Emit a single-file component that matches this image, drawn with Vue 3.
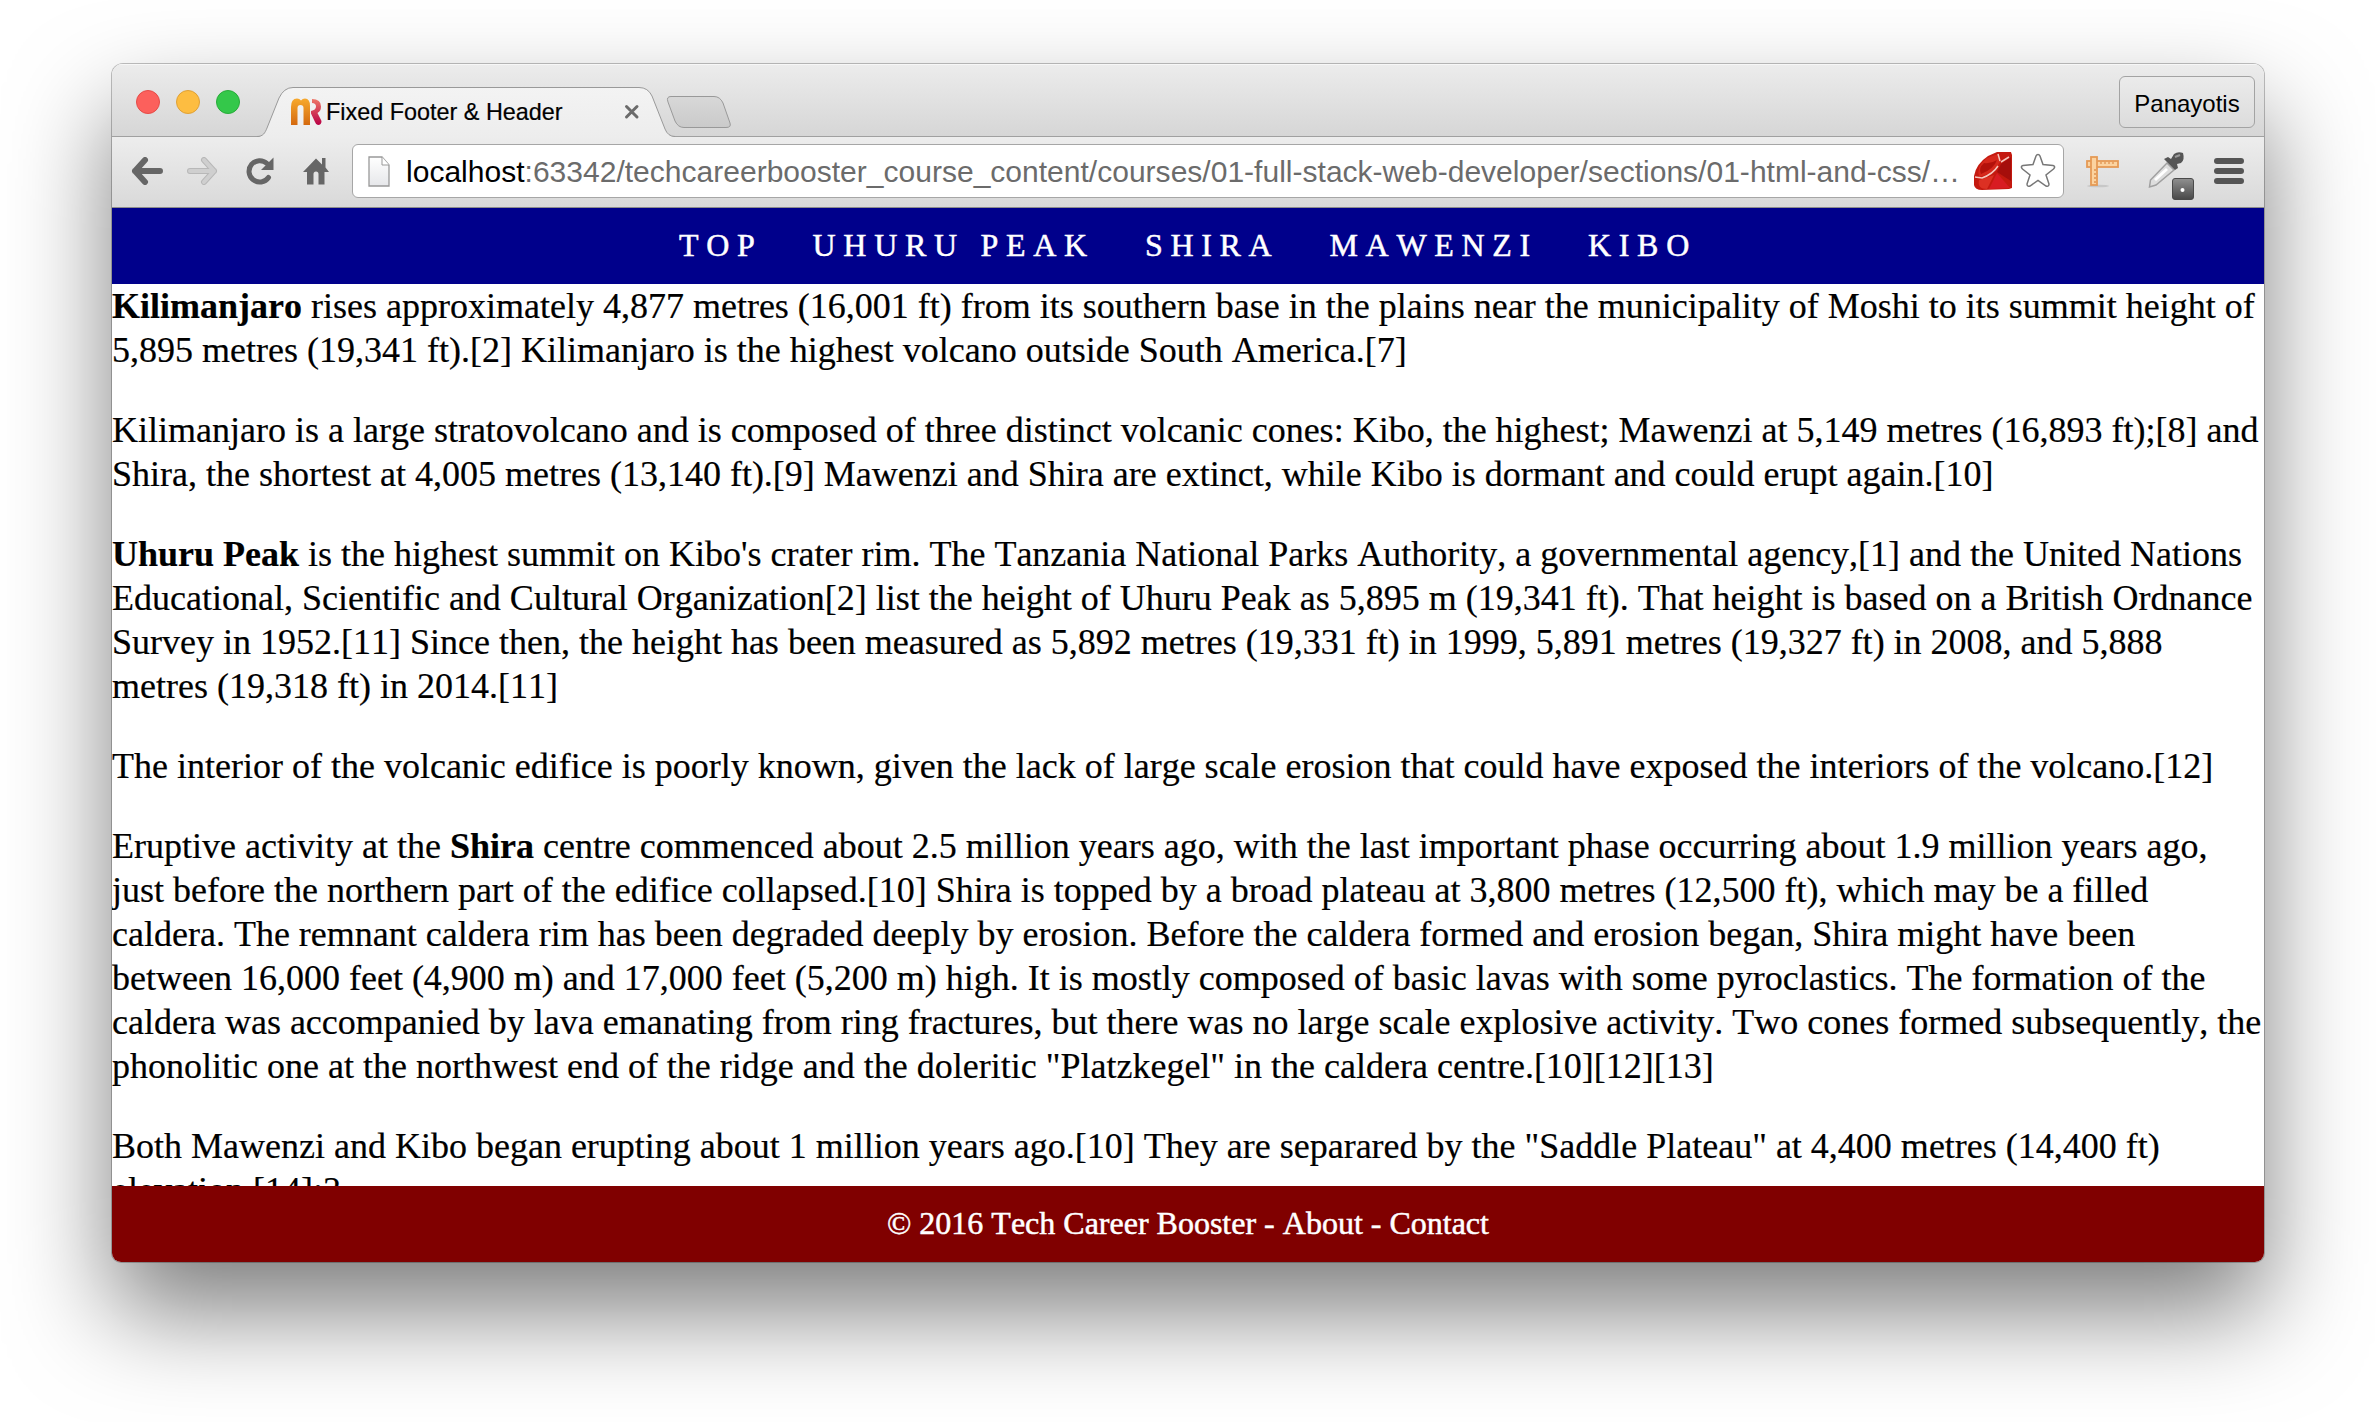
<script setup>
const nav = ['TOP', 'UHURU PEAK', 'SHIRA', 'MAWENZI', 'KIBO']
const paragraphs = [
  [
    ['Kilimanjaro', ' rises approximately 4,877 metres (16,001 ft) from its southern base in the plains near the municipality of Moshi to its summit height of'],
    ['', '5,895 metres (19,341 ft).[2] Kilimanjaro is the highest volcano outside South America.[7]'],
  ],
  [
    ['', 'Kilimanjaro is a large stratovolcano and is composed of three distinct volcanic cones: Kibo, the highest; Mawenzi at 5,149 metres (16,893 ft);[8] and'],
    ['', 'Shira, the shortest at 4,005 metres (13,140 ft).[9] Mawenzi and Shira are extinct, while Kibo is dormant and could erupt again.[10]'],
  ],
  [
    ['Uhuru Peak', " is the highest summit on Kibo's crater rim. The Tanzania National Parks Authority, a governmental agency,[1] and the United Nations"],
    ['', 'Educational, Scientific and Cultural Organization[2] list the height of Uhuru Peak as 5,895 m (19,341 ft). That height is based on a British Ordnance'],
    ['', 'Survey in 1952.[11] Since then, the height has been measured as 5,892 metres (19,331 ft) in 1999, 5,891 metres (19,327 ft) in 2008, and 5,888'],
    ['', 'metres (19,318 ft) in 2014.[11]'],
  ],
  [
    ['', 'The interior of the volcanic edifice is poorly known, given the lack of large scale erosion that could have exposed the interiors of the volcano.[12]'],
  ],
  [
    ['Shira', ' centre commenced about 2.5 million years ago, with the last important phase occurring about 1.9 million years ago,', 'Eruptive activity at the '],
    ['', 'just before the northern part of the edifice collapsed.[10] Shira is topped by a broad plateau at 3,800 metres (12,500 ft), which may be a filled'],
    ['', 'caldera. The remnant caldera rim has been degraded deeply by erosion. Before the caldera formed and erosion began, Shira might have been'],
    ['', 'between 16,000 feet (4,900 m) and 17,000 feet (5,200 m) high. It is mostly composed of basic lavas with some pyroclastics. The formation of the'],
    ['', 'caldera was accompanied by lava emanating from ring fractures, but there was no large scale explosive activity. Two cones formed subsequently, the'],
    ['', 'phonolitic one at the northwest end of the ridge and the doleritic "Platzkegel" in the caldera centre.[10][12][13]'],
  ],
  [
    ['', 'Both Mawenzi and Kibo began erupting about 1 million years ago.[10] They are separared by the "Saddle Plateau" at 4,400 metres (14,400 ft)'],
    ['', 'elevation.[14]:3'],
  ],
]
</script>

<template>
  <div class="desktop">
    <div class="window">
      <div class="tabbar">
        <div class="lights"><i class="red"></i><i class="amber"></i><i class="green"></i></div>
        <div class="tab">
          <svg class="tabshape" width="418" height="74" viewBox="0 0 418 74">
            <defs><linearGradient id="tabfill" x1="0" y1="0" x2="0" y2="1"><stop offset="0" stop-color="#f3f3f3" /><stop offset="1" stop-color="#ededed" /></linearGradient></defs>
            <path d="M0 74V73C6 72.500 8 69 10 64L22 34Q27 23.500 36 23.500H382Q391 23.500 395 32L408 65Q411 72.500 418 73V74Z" fill="url(#tabfill)" />
            <path d="M0 72.500C6 72.500 8 69 10 64L22 34Q27 23.500 36 23.500H382Q391 23.500 395 32L408 65Q411 72.500 418 72.500" fill="none" stroke="#999" />
          </svg>
          <div class="tabcontent">
            <svg width="31" height="28" viewBox="0 0 31 28">
              <defs>
                <linearGradient id="mo" x1="0" y1="0" x2="0" y2="1"><stop offset="0" stop-color="#f7a92d" /><stop offset="1" stop-color="#d4690f" /></linearGradient>
                <linearGradient id="rp" x1="0" y1="0" x2="0" y2="1"><stop offset="0" stop-color="#ee7768" /><stop offset="1" stop-color="#b90045" /></linearGradient>
              </defs>
              <path d="M0 27V9Q0 0.500 6 0.500Q8.500 0.500 10 2.500Q11.500 0.500 14 0.500Q19 0.500 19 8V27H12.500V10Q12.500 7 9.500 7Q6.500 7 6.500 10V27Z" fill="url(#mo)" />
              <path d="M21 1Q30 1 30 8.500Q30 13 26.500 15L30.500 23Q30.500 27 27 27Q25 27 24 24L20 15.500V13Q25 12 25 8.500Q25 5 21 5Z" fill="url(#rp)" />
            </svg>
            <span class="title">Fixed Footer &amp; Header</span>
            <svg class="close" width="16" height="16" viewBox="0 0 16 16"><path d="M2.500 2.500L13 13M13 2.500L2.500 13" stroke="#6b6b6b" stroke-width="3" stroke-linecap="round" /></svg>
          </div>
        </div>
        <svg class="newtab" width="66" height="34" viewBox="0 0 66 34">
          <defs><linearGradient id="nt" x1="0" y1="0" x2="0" y2="1"><stop offset="0" stop-color="#d8d8d8" /><stop offset="1" stop-color="#cacaca" /></linearGradient></defs>
          <path d="M5 0.500H48Q54 0.500 57 7L64 27Q65.500 31.500 60 31.500H18Q12 31.500 9 25L2 6Q0 0.500 5 0.500Z" fill="url(#nt)" stroke="#999" />
        </svg>
        <div class="profile">Panayotis</div>
      </div>

      <div class="toolbar">
        <svg class="back" width="32" height="28" viewBox="0 0 32 28"><path d="M14 3L4 14L14 25M4 14H29" fill="none" stroke="#666" stroke-width="6" stroke-linecap="round" stroke-linejoin="round" /></svg>
        <svg class="fwd" width="32" height="28" viewBox="0 0 32 28"><path d="M18 3L28 14L18 25M28 14H4" fill="none" stroke="#b8b8b8" stroke-width="6" stroke-linecap="round" stroke-linejoin="round" /><path d="M18 3L28 14L18 25M28 14H4" fill="none" stroke="#cfcfcf" stroke-width="4" stroke-linecap="round" stroke-linejoin="round" /></svg>
        <svg class="reload" width="28" height="28" viewBox="0 0 28 28"><path d="M22.500 20.500A10.700 10.700 0 1 1 21 6.500" fill="none" stroke="#666" stroke-width="5" stroke-linecap="round" /><path d="M27.500 0.500V13H15Z" fill="#666" /></svg>
        <svg class="home" width="26" height="28" viewBox="0 0 26 28"><path d="M13 1.500L19 7.500V1H22.500V10.500L26 15H21.500V27.500H15.500V17Q15.500 14.500 13 14.500Q10.500 14.500 10.500 17V27.500H4V15H0Z" fill="#666" /></svg>
        <div class="omnibox">
          <svg class="page" width="22" height="31" viewBox="0 0 22 31"><defs><linearGradient id="pg" x1="0" y1="0" x2="0" y2="1"><stop offset="0" stop-color="#fff" /><stop offset="1" stop-color="#e6e7ea" /></linearGradient></defs><path d="M1 1H14L21 9V30H1Z" fill="url(#pg)" stroke="#999" stroke-width="1.300" /><path d="M14 1V9H21" fill="#fff" stroke="#999" /></svg>
          <span class="url"><b>localhost</b>:63342/techcareerbooster_course_content/courses/01-full-stack-web-developer/sections/01-html-and-css/…</span>
          <svg class="ruby" width="38" height="38" viewBox="0 0 38 38">
            <path d="M14 4L23 0H37L38 3V36L35 37L8 38Q1 38 0 33V24Q2 12 14 4Z" fill="#c4190f" />
            <path d="M13 6L24 2L26 10Q20 22 5 25Q2 14 13 6Z" fill="#d6281c" />
            <path d="M10 11Q17 12 23 8Q20 17 7 22Q4 16 10 11Z" fill="#b3110b" />
            <path d="M27 12L37 5V29L23 20Z" fill="#a50e0b" />
            <path d="M5 28L20 23L13 37Q3 37 5 28Z" fill="#dc3023" />
            <path d="M23 21L36 36L15 37Z" fill="#d81c22" />
            <path d="M1 25L8 26Q19 22 24 14M26 9L24 2M27 10L35 5" fill="none" stroke="#f5c6bd" stroke-width="1.500" />
          </svg>
          <svg class="star" width="36" height="36" viewBox="0 0 36 36"><path d="M18 2.500Q19.300 2.500 20 4L23 12.500L33 13.500Q36 14.500 33.500 17L26 23L29 32Q29 35 26 34L18 28.500L10 34Q7 35 7 32L10 23L2.500 17Q0 14.500 3 13.500L13 12.500L16 4Q16.700 2.500 18 2.500Z" fill="#fff" stroke="#777" stroke-width="1.500" /></svg>
        </div>
        <svg class="ruler" width="34" height="32" viewBox="0 0 34 32">
          <ellipse cx="12" cy="30" rx="11" ry="1.300" fill="#c7c7c7" />
          <rect x="1" y="5" width="31" height="6" fill="#fbd3a0" stroke="#e59a55" stroke-width="1.800" />
          <rect x="5" y="1" width="6" height="28" fill="#fbd3a0" stroke="#e59a55" stroke-width="1.800" />
          <path d="M15 6V8M19 6V8M23 6V8M27 6V8M8 14H10M8 18H10M8 22H10M8 26H10" stroke="#e0934f" stroke-width="1.300" />
        </svg>
        <svg class="dropper" width="48" height="50" viewBox="0 0 48 50">
          <defs><linearGradient id="bd" x1="0" y1="0" x2="0" y2="1"><stop offset="0" stop-color="#909090" /><stop offset="1" stop-color="#484848" /></linearGradient></defs>
          <path d="M19 12L26 19L8 34L1.500 36L2.500 29Z" fill="#ddd" stroke="#a0a0a0" stroke-width="1.500" />
          <path d="M7 29L19 18" stroke="#fff" stroke-width="3" />
          <path d="M16 8L20 6L23 8L26 3Q30 0 35 2Q37 9 33 12L29 13L30 17L27 19Z" fill="#555" />
          <path d="M27 6L32 4" stroke="#999" stroke-width="2" />
          <rect x="24.500" y="27.500" width="21" height="21" rx="2.500" fill="url(#bd)" stroke="#4a4a4a" />
          <circle cx="34.500" cy="39" r="2" fill="#fff" />
        </svg>
        <div class="menu"><i></i><i></i><i></i></div>
      </div>

      <nav class="sitenav"><a v-for="n in nav" :key="n">{{ n }}</a></nav>
      <main class="content">
        <p v-for="(p, i) in paragraphs" :key="i">
          <span v-for="(l, j) in p" :key="j" class="line">{{ l[2] }}<b>{{ l[0] }}</b>{{ l[1] }}</span>
        </p>
      </main>
      <footer class="sitefoot">© 2016 Tech Career Booster - About - Contact</footer>
    </div>
  </div>
</template>

<style>
body { margin: 0; background: #fff; }
</style>

<style scoped>
.desktop { width: 2376px; height: 1422px; box-sizing: border-box; padding: 64px 112px 0; overflow: hidden; background: #fff; }
.window { width: 2152px; height: 1198px; border-radius: 11px 11px 9px 9px; overflow: hidden; display: flex; flex-direction: column; background: #fff; box-shadow: 0 0 0 1px rgba(0,0,0,.24), 0 50px 100px rgba(0,0,0,.51); }
.tabbar { flex: none; height: 73px; box-sizing: border-box; display: flex; align-items: flex-start; background: linear-gradient(#ececec, #d6d6d6); border-bottom: 1px solid #a0a0a0; box-shadow: inset 0 1px #f7f7f7; }
.lights { display: flex; gap: 16px; padding: 26px 0 0 24px; width: 120px; }
.lights i { width: 24px; height: 24px; box-sizing: border-box; border-radius: 50%; }
.red { background: #fc605c; border: 1px solid #e64b47; }
.amber { background: #fdbd41; border: 1px solid #e0a136; }
.green { background: #34c84a; border: 1px solid #28ac39; }
.tab { position: relative; width: 418px; height: 73px; margin-left: 1px; }
.tabshape { position: absolute; left: 0; top: 0; }
.tabcontent { position: relative; display: flex; align-items: center; height: 28px; margin: 34px 0 0 34px; }
.title { width: 240px; margin-left: 4px; font: 23.4px/28px "Liberation Sans", Arial, sans-serif; color: #000; white-space: nowrap; -webkit-text-stroke: .2px #000; }
.close { margin-left: 58px; }
.newtab { margin: 32px 0 0 -9px; position: relative; }
.profile { margin: 12px 9px 0 auto; box-sizing: border-box; width: 136px; height: 52px; border: 1px solid #a3a3a3; border-radius: 6px; background: linear-gradient(#ebebeb, #dcdcdc); font: 24px/53px "Liberation Sans", Arial, sans-serif; text-align: center; }
.toolbar { flex: none; height: 71px; box-sizing: border-box; display: flex; align-items: flex-start; background: linear-gradient(#ededed, #d9d9d9); border-bottom: 1px solid #8d8d8d; }
.back { margin: 20px 0 0 19px; }
.fwd { margin: 20px 0 0 23px; }
.reload { margin: 20px 0 0 28px; }
.home { margin: 20px 0 0 29px; }
.omnibox { display: flex; align-items: flex-start; box-sizing: border-box; margin: 7px 0 0 23px; width: 1712px; height: 54px; background: #fff; border: 1px solid #a6a6a6; border-radius: 6px; }
.page { margin: 11px 0 0 15px; }
.url { flex: none; width: 1558px; margin-left: 16px; font: 30px/54px "Liberation Sans", Arial, sans-serif; letter-spacing: .015px; color: #6b6b6b; white-space: nowrap; }
.url b { font-weight: 400; color: #000; }
.ruby { margin: 7px 0 0 10px; }
.star { margin: 7px 0 0 8px; }
.ruler { margin: 19px 0 0 22px; }
.dropper { margin: 14px 0 0 28px; }
.menu { display: flex; flex-direction: column; gap: 4px; margin: 21px 0 0 18px; }
.menu i { width: 30px; height: 6px; border-radius: 3px; background: #555; }
.sitenav { flex: none; height: 76px; display: flex; justify-content: center; gap: 50px; background: #00008b; color: #fff; font: 32px/74px "Liberation Serif", "Times New Roman", serif; font-kerning: none; letter-spacing: 7.7px; white-space: nowrap; -webkit-text-stroke: .5px #fff; }
.content { flex: 1; min-height: 0; overflow: hidden; background: #fff; color: #000; font: 36px/44px "Liberation Serif", "Times New Roman", serif; font-kerning: none; -webkit-text-stroke: .2px #000; }
.content p { margin: 0 0 36px; }
.line { display: block; white-space: pre; }
.sitefoot { flex: none; height: 76px; background: #800000; color: #fff; text-align: center; font: 32px/74px "Liberation Serif", "Times New Roman", serif; font-kerning: none; -webkit-text-stroke: .5px #fff; }
</style>
